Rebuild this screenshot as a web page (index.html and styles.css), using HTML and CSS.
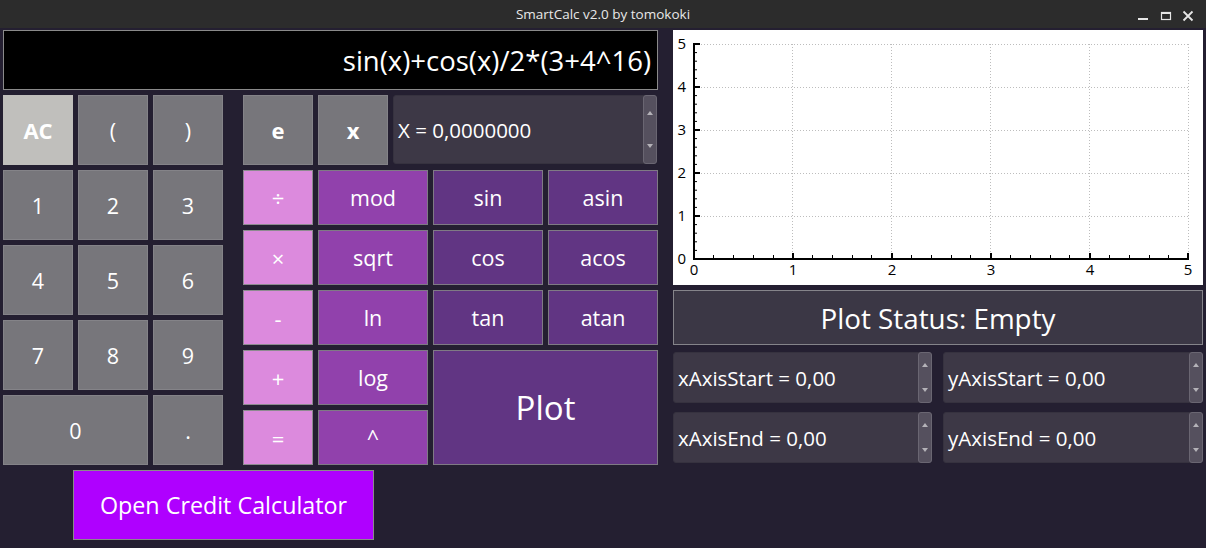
FILE: index.html
```html
<!DOCTYPE html>
<html>
<head>
<meta charset="utf-8">
<title>SmartCalc v2.0 by tomokoki</title>
<link rel="stylesheet" href="styles.css">
</head>
<body>
<div class="titlebar">
  <div class="tb-side"></div>
  <div class="tb-title">SmartCalc v2.0 by tomokoki</div>
  <div class="tb-controls">
    <svg width="56" height="28" viewBox="0 0 56 28">
      <rect x="0" y="18" width="10" height="2" fill="#e6e6e6"/>
      <rect x="23.5" y="12.5" width="9" height="7" fill="none" stroke="#e6e6e6" stroke-width="1.2"/>
      <rect x="23" y="12" width="10" height="2" fill="#e6e6e6"/>
      <path d="M45.5 11.5 L54.5 20.5 M54.5 11.5 L45.5 20.5" stroke="#e6e6e6" stroke-width="1.8" fill="none"/>
    </svg>
  </div>
</div>
<div class="main">
  <div class="left">
    <div class="display">sin(x)+cos(x)/2*(3+4^16)</div>
    <div class="keypad">
      <div class="numpad">
        <div class="btn btn-ac">AC</div>
        <div class="btn btn-grey">(</div>
        <div class="btn btn-grey">)</div>
        <div class="btn btn-grey">1</div>
        <div class="btn btn-grey">2</div>
        <div class="btn btn-grey">3</div>
        <div class="btn btn-grey">4</div>
        <div class="btn btn-grey">5</div>
        <div class="btn btn-grey">6</div>
        <div class="btn btn-grey">7</div>
        <div class="btn btn-grey">8</div>
        <div class="btn btn-grey">9</div>
        <div class="btn btn-grey span2">0</div>
        <div class="btn btn-grey">.</div>
      </div>
      <div class="funcs">
        <div class="func-top">
          <div class="btn btn-grey btn-bold sq">e</div>
          <div class="btn btn-grey btn-bold sq">x</div>
          <div class="spin spin-x">
            <div class="spin-text">X = 0,0000000</div>
            <div class="spin-btns"><span class="half"><i class="up"></i></span><span class="half"><i class="down"></i></span></div>
          </div>
        </div>
        <div class="func-grid">
          <div class="btn btn-pink">÷</div>
          <div class="btn btn-mid">mod</div>
          <div class="btn btn-dark">sin</div>
          <div class="btn btn-dark">asin</div>
          <div class="btn btn-pink">×</div>
          <div class="btn btn-mid">sqrt</div>
          <div class="btn btn-dark">cos</div>
          <div class="btn btn-dark">acos</div>
          <div class="btn btn-pink">-</div>
          <div class="btn btn-mid">ln</div>
          <div class="btn btn-dark">tan</div>
          <div class="btn btn-dark">atan</div>
          <div class="btn btn-pink">+</div>
          <div class="btn btn-mid">log</div>
          <div class="btn btn-dark btn-plot">Plot</div>
          <div class="btn btn-pink">=</div>
          <div class="btn btn-mid">^</div>
        </div>
      </div>
    </div>
    <div class="credit-row">
      <div class="btn-credit">Open Credit Calculator</div>
    </div>
  </div>
  <div class="right">
    <div class="graph">
      <svg width="530" height="255" viewBox="0 0 530 255">
        <g stroke="#bdbdbd" stroke-width="1" stroke-dasharray="1 2" fill="none">
          <path d="M119.5 14 V229 M218.5 14 V229 M317.5 14 V229 M416.5 14 V229 M515.5 14 V229"/>
          <path d="M22 14.5 H516 M22 57.5 H516 M22 100.5 H516 M22 143.5 H516 M22 186.5 H516"/>
        </g>
        <g stroke="#000" stroke-width="1" fill="none">
          <path d="M21 22.6 H24 M21 31.2 H24 M21 39.8 H24 M21 48.4 H24 M21 65.6 H24 M21 74.2 H24 M21 82.8 H24 M21 91.4 H24 M21 108.6 H24 M21 117.2 H24 M21 125.8 H24 M21 134.4 H24 M21 151.6 H24 M21 160.2 H24 M21 168.8 H24 M21 177.4 H24 M21 194.6 H24 M21 203.2 H24 M21 211.8 H24 M21 220.4 H24"/>
          <path d="M40.5 229 V225 M60.5 229 V225 M80.5 229 V225 M100.5 229 V225 M139.5 229 V225 M159.5 229 V225 M179.5 229 V225 M198.5 229 V225 M238.5 229 V225 M258.5 229 V225 M278.5 229 V225 M297.5 229 V225 M337.5 229 V225 M357.5 229 V225 M377.5 229 V225 M396.5 229 V225 M436.5 229 V225 M456.5 229 V225 M476.5 229 V225 M495.5 229 V225"/>
        </g>
        <g stroke="#000" stroke-width="2" fill="none">
          <path d="M21 14 H27 M21 57 H27 M21 100 H27 M21 143 H27 M21 186 H27"/>
          <path d="M120 230 V223 M219 230 V223 M318 230 V223 M417 230 V223 M515 230 V223"/>
          <path d="M21 13 V230 M20 229 H516"/>
        </g>
        <g class="axis-label" text-anchor="end">
          <text x="13" y="19">5</text>
          <text x="13" y="62">4</text>
          <text x="13" y="105">3</text>
          <text x="13" y="148">2</text>
          <text x="13" y="191">1</text>
          <text x="13" y="234">0</text>
        </g>
        <g class="axis-label" text-anchor="middle">
          <text x="21" y="245">0</text>
          <text x="120" y="245">1</text>
          <text x="219" y="245">2</text>
          <text x="318" y="245">3</text>
          <text x="417" y="245">4</text>
          <text x="515" y="245">5</text>
        </g>
      </svg>
    </div>
    <div class="status">Plot Status: Empty</div>
    <div class="axes">
      <div class="spin">
        <div class="spin-text">xAxisStart = 0,00</div>
        <div class="spin-btns"><span class="half"><i class="up"></i></span><span class="half"><i class="down"></i></span></div>
      </div>
      <div class="spin">
        <div class="spin-text">yAxisStart = 0,00</div>
        <div class="spin-btns"><span class="half"><i class="up"></i></span><span class="half"><i class="down"></i></span></div>
      </div>
      <div class="spin">
        <div class="spin-text">xAxisEnd = 0,00</div>
        <div class="spin-btns"><span class="half"><i class="up"></i></span><span class="half"><i class="down"></i></span></div>
      </div>
      <div class="spin">
        <div class="spin-text">yAxisEnd = 0,00</div>
        <div class="spin-btns"><span class="half"><i class="up"></i></span><span class="half"><i class="down"></i></span></div>
      </div>
    </div>
  </div>
</div>
</body>
</html>
```
FILE: styles.css
```css
* { box-sizing: border-box; }
html, body {
  margin: 0;
  padding: 0;
}
body {
  width: 1206px;
  height: 548px;
  overflow: hidden;
  background: #241f31;
  font-family: "Open Sans", "Noto Sans", sans-serif;
  color: #ffffff;
}
.titlebar {
  height: 28px;
  background: #2c2c2c;
  display: grid;
  grid-template-columns: 1fr auto 1fr;
  align-items: center;
}
.tb-title {
  font-size: 13.5px;
  font-weight: 500;
  color: #e8e8e8;
  line-height: 28px;
}
.tb-controls {
  justify-self: end;
  display: flex;
  margin-right: 12px;
  height: 28px;
}
.main {
  display: flex;
  gap: 15px;
  padding: 2px 3px 0 3px;
}
.left {
  width: 655px;
  display: flex;
  flex-direction: column;
  gap: 5px;
}
.display {
  height: 60px;
  background: #000;
  border: 1px solid #8a8a8a;
  display: flex;
  align-items: center;
  justify-content: flex-end;
  padding-right: 6px;
  font-size: 27.5px;
  white-space: nowrap;
}
.keypad {
  display: flex;
  gap: 20px;
}
.numpad {
  display: grid;
  grid-template-columns: repeat(3, 70px);
  grid-auto-rows: 70px;
  gap: 5px;
}
.span2 { grid-column: span 2; }
.funcs {
  width: 415px;
  display: flex;
  flex-direction: column;
  gap: 5px;
}
.func-top {
  display: flex;
  gap: 5px;
  height: 70px;
}
.sq { width: 70px; height: 70px; }
.func-grid {
  display: grid;
  grid-template-columns: 70px 110px 110px 110px;
  grid-auto-rows: 55px;
  gap: 5px;
}
.btn {
  display: flex;
  align-items: center;
  justify-content: center;
  font-size: 21.5px;
  color: #fff;
  border: 1px solid #85848a;
}
.btn-grey { background: #77767b; border-color: #848388; }
.btn-ac { background: #c0bfbc; border-color: #c0bfbc; font-weight: 700; font-size: 22px; }
.btn-bold { font-weight: 700; font-size: 22px; }
.btn-pink { background: #dc8add; border-color: #8e8a90; font-size: 22px; }
.btn-mid { background: #9141ac; border-color: #7f7a84; }
.btn-dark { background: #613583; border-color: #7f7a84; }
.btn.btn-plot {
  grid-column: 3 / span 2;
  grid-row: 4 / span 2;
  font-size: 33px;
}
.credit-row {
  display: flex;
  padding-left: 70px;
}
.btn-credit {
  width: 301px;
  height: 70px;
  background: #af00ff;
  border: 1px solid #8a8a8a;
  display: flex;
  align-items: center;
  justify-content: center;
  font-size: 23.3px;
}
.spin {
  display: flex;
  background: #3d3846;
  border: 1px solid #36323f;
  border-radius: 3px;
}
.spin-x {
  width: 264px;
  height: 69px;
}
.spin-text {
  flex: 1;
  display: flex;
  align-items: center;
  padding-left: 4px;
  font-size: 20.5px;
  white-space: nowrap;
}
.spin-btns {
  width: 14px;
  display: flex;
  flex-direction: column;
  background: #55505e;
  border: 1px solid #6a6672;
  border-radius: 3px;
  margin: -1px -1px -1px 0;
}
.half {
  flex: 1;
  display: flex;
  align-items: center;
  justify-content: center;
}
.up, .down {
  display: block;
  width: 0;
  height: 0;
  border-left: 3.5px solid transparent;
  border-right: 3.5px solid transparent;
}
.up { border-bottom: 4px solid #b4b2b8; }
.down { border-top: 4px solid #b4b2b8; }
.right {
  width: 530px;
  display: flex;
  flex-direction: column;
}
.graph {
  height: 255px;
  background: #ffffff;
}
.graph svg { display: block; }
.axis-label {
  font-family: "Open Sans", "Noto Sans", sans-serif;
  font-size: 15px;
  fill: #000;
}
.status {
  margin-top: 5px;
  height: 55px;
  background: #3b3745;
  border: 1px solid #85848a;
  display: flex;
  align-items: center;
  justify-content: center;
  font-size: 27.8px;
}
.axes {
  margin-top: 7px;
  display: grid;
  grid-template-columns: 259px 260px;
  grid-auto-rows: 51px;
  column-gap: 11px;
  row-gap: 9px;
}
```
